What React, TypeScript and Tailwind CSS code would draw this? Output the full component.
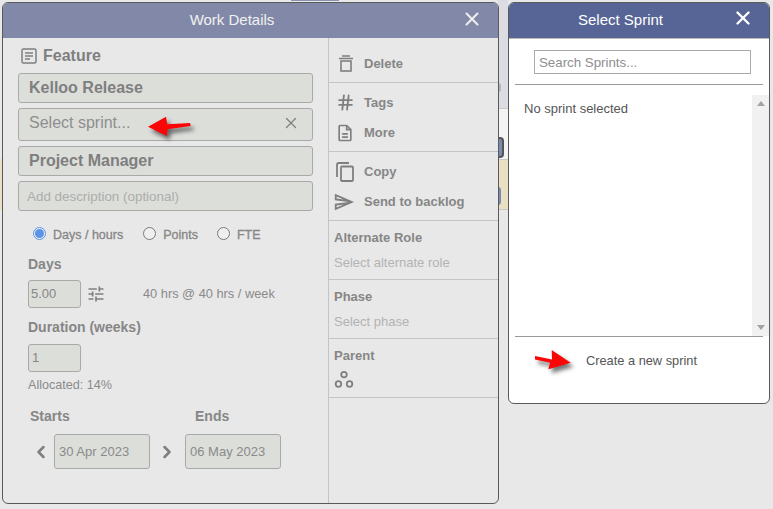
import { ChevronLeft, ChevronRight, Hash, X } from "lucide-react";

const font = "font-['Liberation_Sans',Arial,sans-serif]";

function Field({ children, className = "" }: { children: React.ReactNode; className?: string }) {
  return (
    <div className={`flex items-center rounded-[3px] border border-[#a9a9a9] bg-[#dcdeda] ${className}`}>
      {children}
    </div>
  );
}

function Radio({ label, checked, className = "" }: { label: string; checked?: boolean; className?: string }) {
  return (
    <div className={`flex items-center gap-[7px] text-[12.5px] text-[#868686] ${className}`}>
      <span
        className={`-mt-[3px] flex h-[13px] w-[13px] items-center justify-center rounded-full border bg-[#efefef] ${
          checked ? "border-[#5c93e6]" : "border-[#7a7a7a]"
        }`}
      >
        {checked && <span className="h-[9px] w-[9px] rounded-full bg-[#5c93e6]" />}
      </span>
      <span className="mt-[1px] [-webkit-text-stroke:0.3px_#868686]">{label}</span>
    </div>
  );
}

function RedArrow({ points, className = "" }: { points: string; className?: string }) {
  return (
    <svg viewBox="0 0 46 26" className={`drop-shadow-[3px_4px_2px_rgba(0,0,0,0.55)] ${className}`}>
      <polygon points={points} fill="#fb0606" />
    </svg>
  );
}

function SideItem({ icon, label }: { icon: React.ReactNode; label: string }) {
  return (
    <div className="flex h-[20px] items-center text-[13px] font-bold text-[#868686]">
      <span className="flex w-[35px] items-center">{icon}</span>
      {label}
    </div>
  );
}

function SideBlock({ title, hint, children }: { title: string; hint?: string; children?: React.ReactNode }) {
  return (
    <div className="h-[59px] border-b border-[#c4c4c4] pl-[5px] pt-[9px] text-[13px] leading-[16px]">
      <div className="font-bold text-[#868686]">{title}</div>
      {hint && <div className="mt-[9px] text-[#b3b3b3]">{hint}</div>}
      {children}
    </div>
  );
}

export default function App() {
  return (
    <div className={`relative h-[509px] w-[773px] overflow-hidden bg-[#e8e8e8] ${font}`}>
      {/* bits of the page behind the dialogs */}
      <div className="absolute left-[291px] top-0 h-px w-[48px] bg-[#8a93b3]" />
      <div className="absolute left-[498px] top-0 h-[108px] w-[10px] bg-[#dcdde3]" />
      <div className="absolute left-[498px] top-[108px] h-[51px] w-[10px] border-t border-[#c9c9c9] bg-[#f4f4f4]" />
      <div className="absolute left-[498px] top-[159px] h-[51px] w-[10px] border-y border-[#c9c9c9] bg-[#e9dfc3]" />
      <div className="absolute left-[498px] top-[137px] h-[21px] w-[6px] rounded-r-[4px] border-y-2 border-r-2 border-[#555] bg-[#7e8bb0]" />
      <div className="absolute left-[498px] top-[187px] h-[18px] w-[3px] rounded-r-[3px] bg-[#7e8bb0]" />
      <div className="absolute left-[498px] top-[83px] h-[9px] w-[3px] rounded-r-full bg-[#b5b5b5]" />
      <div className="absolute left-0 top-[159px] h-[51px] w-[2px] bg-[#e9dfc3]" />

      {/* Work Details dialog */}
      <div className="absolute left-[2px] top-[2px] flex h-[502px] w-[497px] flex-col overflow-hidden rounded-[6px] border border-[#5a5a5a] bg-[#e8e8e8]">
        <div className="relative flex h-[35px] shrink-0 items-center justify-center bg-[#8289a8] pr-[37px] text-[15px] text-[#f1f1f1]">
          Work Details
          <X className="absolute right-[15px] top-[5px] h-[22px] w-[22px] text-[#eeeeee]" strokeWidth={2.2} />
        </div>
        <div className="flex min-h-0 flex-1">
          {/* main column */}
          <div className="flex w-[326px] shrink-0 flex-col border-r border-[#c4c4c4] pl-[15px]">
            <div className="mt-[8px] flex h-[20px] items-center gap-[6px] pl-[3px] text-[16px] font-bold text-[#7f7f7f]">
              <svg viewBox="0 0 16 16" className="h-[16px] w-[16px]" fill="none" stroke="#7f7f7f" strokeWidth="1.5">
                <rect x="1" y="1" width="14" height="14" rx="1.5" />
                <path d="M4 5h8M4 8h8M4 11h5" />
              </svg>
              Feature
            </div>
            <Field className="mt-[7px] h-[30px] w-[295px] pl-[10px] text-[16px] font-bold text-[#7f7f7f]">Kelloo Release</Field>
            <Field className="mt-[5px] h-[33px] w-[295px] justify-between pb-[3px] pl-[10px] pr-[12px] text-[16px] text-[#8e8e8e]">
              Select sprint...
              <X className="h-[18px] w-[18px] text-[#7f7f7f]" strokeWidth={1.7} />
            </Field>
            <Field className="mt-[5px] h-[30px] w-[295px] pl-[8px] text-[16px] font-bold text-[#7f7f7f]">
              <span className="ml-[2px]">Project Manager</span>
            </Field>
            <Field className="mt-[5px] h-[30px] w-[295px] pl-[8px] pt-[2px] text-[13.4px] text-[#adadad]">Add description (optional)</Field>

            <div className="mt-[14px] flex h-[20px] items-center pl-[15px]">
              <Radio label="Days / hours" checked />
              <Radio label="Points" className="ml-[20px]" />
              <Radio label="FTE" className="ml-[19px]" />
            </div>
            <div className="ml-[10px] mt-[10px] text-[14px] font-bold leading-[18px] text-[#868686]">Days</div>
            <div className="ml-[10px] mt-[7px] flex items-center">
              <Field className="h-[28px] w-[53px] pl-[2px] text-[13px] text-[#868686]">5.00</Field>
              <svg viewBox="0 0 24 24" className="ml-[5px] h-[20px] w-[20px]" fill="#7f7f7f">
                <path d="M3 17v2h6v-2H3zM3 5v2h10V5H3zm10 16v-2h8v-2h-8v-2h-2v6h2zM7 9v2H3v2h4v2h2V9H7zm14 4v-2H11v2h10zm-6-4h2V7h4V5h-4V3h-2v6z" />
              </svg>
              <span className="ml-[37px] text-[12.8px] text-[#8a8a8a]">40 hrs @ 40 hrs / week</span>
            </div>
            <div className="ml-[10px] mt-[10px] text-[14px] font-bold leading-[18px] text-[#868686]">Duration (weeks)</div>
            <Field className="ml-[10px] mt-[8px] h-[28px] w-[53px] pl-[3px] text-[13px] text-[#868686]">1</Field>
            <div className="ml-[10px] mt-[4px] text-[12.6px] leading-[18px] text-[#8a8a8a]">Allocated: 14%</div>
            <div className="ml-[12px] mt-[13px] flex text-[14px] font-bold leading-[18px] text-[#868686]">
              <span className="w-[165px]">Starts</span>
              <span>Ends</span>
            </div>
            <div className="ml-[13px] mt-[9px] flex items-center">
              <ChevronLeft className="h-[20px] w-[20px] text-[#7f7f7f]" strokeWidth={3} />
              <Field className="ml-[3px] h-[35px] w-[96px] pl-[4px] text-[13px] text-[#8a8a8a]">30 Apr 2023</Field>
              <ChevronRight className="ml-[7px] h-[20px] w-[20px] text-[#7f7f7f]" strokeWidth={3} />
              <Field className="ml-[8px] h-[35px] w-[96px] pl-[4px] text-[13px] text-[#8a8a8a]">06 May 2023</Field>
            </div>
          </div>

          {/* side column */}
          <div className="flex flex-1 flex-col">
            <div className="flex h-[45px] items-center border-b border-[#c4c4c4] pt-[7px]">
              <SideItem
                label="Delete"
                icon={
                  <svg viewBox="0 0 14 17" className="ml-[10px] h-[17px] w-[14px]" fill="none" stroke="#7f7f7f" strokeWidth="1.6">
                    <path d="M3 1h8M0 3.5h14" />
                    <rect x="2" y="6" width="10" height="10" />
                  </svg>
                }
              />
            </div>
            <div className="flex h-[69px] flex-col justify-center gap-[10px] border-b border-[#c4c4c4] pt-[1px]">
              <SideItem label="Tags" icon={<Hash className="ml-[7px] h-[19px] w-[19px] text-[#7f7f7f]" strokeWidth={2.3} />} />
              <SideItem
                label="More"
                icon={
                  <svg viewBox="0 0 24 24" className="ml-[6px] h-[20px] w-[20px]" fill="none" stroke="#7f7f7f" strokeWidth="2">
                    <path d="M14 3H6a1 1 0 0 0-1 1v16a1 1 0 0 0 1 1h12a1 1 0 0 0 1-1V8z" />
                    <path d="M14 3v5h5M8.5 13h7M8.5 17h7" />
                  </svg>
                }
              />
            </div>
            <div className="flex h-[69px] flex-col justify-center gap-[10px] border-b border-[#c4c4c4] pt-[1px]">
              <SideItem
                label="Copy"
                icon={
                  <svg viewBox="0 0 18 20" className="ml-[7px] h-[20px] w-[18px]" fill="none" stroke="#7f7f7f" strokeWidth="1.8">
                    <path d="M13 1H2.5A1.5 1.5 0 0 0 1 2.500V15" />
                    <rect x="5" y="4.500" width="12" height="14.500" rx="1" />
                  </svg>
                }
              />
              <SideItem
                label="Send to backlog"
                icon={
                  <svg viewBox="0 0 24 24" className="ml-[4px] h-[22px] w-[22px]" fill="#7f7f7f">
                    <path d="M4.010 6.030l7.510 3.220-7.520-1 .01-2.220m7.500 8.720L4 17.970v-2.220l7.510-1M2.010 3L2 10l15 2-15 2 .01 7L23 12 2.010 3z" />
                  </svg>
                }
              />
            </div>
            <SideBlock title="Alternate Role" hint="Select alternate role" />
            <SideBlock title="Phase" hint="Select phase" />
            <SideBlock title="Parent">
              <svg viewBox="0 0 18 16" className="mt-[6px] h-[18px] w-[20px]" fill="none" stroke="#7f7f7f" strokeWidth="1.6">
                <circle cx="9" cy="4" r="2.500" />
                <circle cx="4" cy="12.500" r="2.500" />
                <circle cx="14" cy="12.500" r="2.500" />
              </svg>
            </SideBlock>
          </div>
        </div>
      </div>

      {/* arrow over the sprint field */}
      <RedArrow
        points="1,12.700 19,2.700 20.300,10.300 43,9 43.700,12 20.700,15.300 19.700,22"
        className="absolute left-[147px] top-[114px] h-[26px] w-[46px]"
      />

      {/* Select Sprint dialog */}
      <div className="absolute left-[508px] top-[2px] flex h-[402px] w-[262px] flex-col overflow-hidden rounded-[6px] border border-[#5a5a5a] bg-white">
        <div className="relative flex h-[36px] shrink-0 items-center justify-center border-b border-[#b9b9b9] bg-[#566596] pr-[37px] text-[15px] text-white">
          Select Sprint
          <X className="absolute right-[15px] top-[4px] h-[22px] w-[22px] text-white" strokeWidth={2.6} />
        </div>
        <div className="ml-[25px] mt-[11px] flex h-[24px] w-[217px] items-center border border-[#a9a9a9] pl-[4px] pt-[1px] text-[13.300px] text-[#8e8e8e]">
          Search Sprints...
        </div>
        <div className="mx-[6px] mt-[10px] flex h-[252px] border-t border-[#9a9a9a]">
          <div className="flex-1 pl-[9px] pt-[15px] text-[13px] leading-[18px] text-[#555]">No sprint selected</div>
          <div className="-mr-[6px] mt-[10px] flex w-[17px] flex-col items-center justify-between bg-[#f1f1f1] py-[6px]">
            <span className="h-0 w-0 border-x-[4px] border-b-[5px] border-x-transparent border-b-[#a3a3a3]" />
            <span className="h-0 w-0 border-x-[4px] border-t-[5px] border-x-transparent border-t-[#a3a3a3]" />
          </div>
        </div>
        <div className="mx-[6px] flex h-[46px] items-center border-t border-[#9a9a9a] pl-[71px] pt-[2px] text-[12.800px] text-[#555]">
          Create a new sprint
        </div>
      </div>
      <RedArrow
        points="2,8 19,11.500 18.700,2 37.700,14.700 15.300,21.300 17,14.700 2,11.500"
        className="absolute left-[533px] top-[348px] h-[26px] w-[46px]"
      />
    </div>
  );
}
